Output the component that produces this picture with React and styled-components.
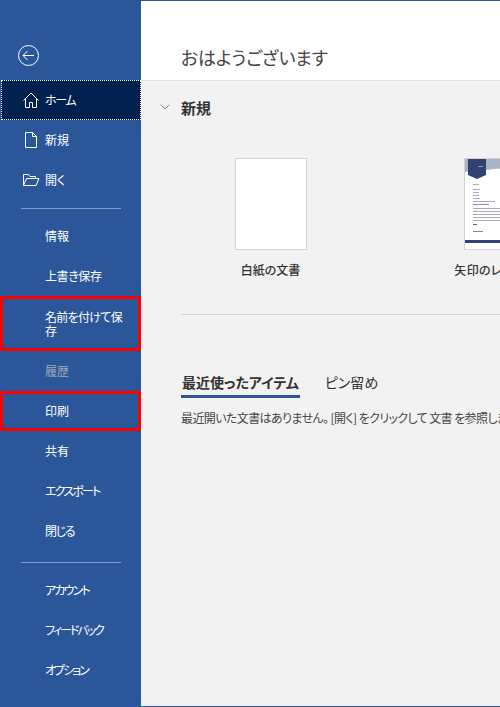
import React from "react";
import styled, { createGlobalStyle } from "styled-components";
import { ChevronDown } from "lucide-react";

const GlobalStyle = createGlobalStyle`
  html, body {
    margin: 0;
    padding: 0;
    background: #f2f2f2;
  }
  body {
    font-family: "Noto Sans CJK JP", "Noto Sans", sans-serif;
    font-feature-settings: "palt";
  }
`;

const Window = styled.div`
  display: flex;
  width: 500px;
  height: 707px;
  overflow: hidden;
  box-sizing: border-box;
  border-top: 1px solid #2b579a;
  border-bottom: 1px solid #2b579a;
`;

const Sidebar = styled.nav`
  flex: 0 0 141px;
  display: flex;
  flex-direction: column;
  background: #2b579a;
`;

const BackButton = styled.div`
  height: 79px;
  display: flex;
  align-items: flex-start;
  padding: 44px 0 0 18px;
  box-sizing: border-box;
  color: #fff;
`;

const NavItem = styled.div`
  display: flex;
  align-items: center;
  box-sizing: border-box;
  min-height: 40px;
  padding: ${(p) => (p.$tall ? "0 6px 0 45px" : "0 0 0 45px")};
  height: ${(p) => (p.$tall ? "55px" : "40px")};
  font-size: 12px;
  line-height: 14px;
  letter-spacing: ${(p) => p.$track || "0"};
  color: ${(p) => (p.$disabled ? "#a0a8b8" : "#fff")};
  background: ${(p) => (p.$active ? "#002050" : "transparent")};
  border: ${(p) =>
    p.$mark
      ? "3px solid #ff0000"
      : p.$active
      ? "1px dotted #fff"
      : "0 solid transparent"};
  border-radius: ${(p) => (p.$mark ? "2px" : "0")};
  ${(p) => p.$mark && "padding-left: 42px;"}
  ${(p) => p.$active && "padding-left: 20px; margin-left: 1px;"}
  ${(p) => p.$withIcon && !p.$active && "padding-left: 22px;"}
`;

const NavIcon = styled.svg`
  flex: 0 0 18px;
  width: 18px;
  height: 18px;
  margin-right: 5px;
  fill: none;
  stroke: #fff;
  stroke-width: 1;
`;

const Separator = styled.div`
  height: 1px;
  margin: ${(p) => p.$margin};
  background: #7f9fca;
`;

const Main = styled.main`
  flex: 1;
  min-width: 0;
  display: flex;
  flex-direction: column;
  background: #f2f2f2;
  overflow: hidden;
`;

const Greeting = styled.header`
  height: 80px;
  box-sizing: border-box;
  padding: 44px 0 0 40px;
  background: #fff;
  border-bottom: 1px solid #e1e1e1;
  font-size: 18px;
  line-height: 24px;
  letter-spacing: -0.2px;
  color: #444;
`;

const SectionHead = styled.div`
  display: flex;
  align-items: center;
  gap: 8px;
  height: 20px;
  margin: 16px 0 0 16px;
  font-size: 15px;
  font-weight: 700;
  color: #333;
`;

const Tiles = styled.div`
  display: flex;
  gap: 84px;
  margin: 41px 0 0 57px;
`;

const Tile = styled.div`
  flex: 0 0 145px;
  display: flex;
  flex-direction: column;
  align-items: center;
`;

const Paper = styled.div`
  width: 72px;
  height: 92px;
  box-sizing: border-box;
  background: #fff;
  border: 1px solid #d2d2d2;
`;

const TileLabel = styled.div`
  margin-top: 12px;
  font-size: 12px;
  line-height: 16px;
  font-weight: 500;
  letter-spacing: ${(p) => p.$track || "0"};
  color: #333;
  white-space: nowrap;
`;

const Rule = styled.div`
  height: 1px;
  margin: 36px 0 0 40px;
  background: #d2d2d2;
`;

const TabBar = styled.div`
  display: flex;
  gap: 24px;
  margin: 57px 0 0 40px;
`;

const Tab = styled.div`
  height: 26px;
  box-sizing: border-box;
  padding: 0 1px;
  font-size: 14px;
  line-height: 20px;
  font-weight: ${(p) => (p.$active ? 700 : 400)};
  color: #333;
  border-bottom: ${(p) => (p.$active ? "3px solid #2b579a" : "0")};
`;

const EmptyText = styled.p`
  margin: 11px 0 0 40px;
  font-size: 12px;
  line-height: 18px;
  letter-spacing: -0.6px;
  color: #444;
  white-space: nowrap;
`;

const Home = () => (
  <NavIcon viewBox="0 0 18 18">
    <path d="M1.5 9.5 9 2l7.5 7.5M3.5 8v8.5h4v-5h3v5h4V8" />
  </NavIcon>
);

const Doc = () => (
  <NavIcon viewBox="0 0 18 18">
    <path d="M3.5 1.5h7l4 4v11h-11zM10.5 1.5v4h4" />
  </NavIcon>
);

const Folder = () => (
  <NavIcon viewBox="0 0 18 18">
    <path d="M1.5 14.5v-11h5l1.5 2h5.5v2M1.5 14.5l3-7h12.5l-3 7z" />
  </NavIcon>
);

const LetterThumb = () => (
  <svg width="72" height="92" viewBox="0 0 72 92">
    <rect width="72" height="92" fill="#fff" />
    <g style={{ filter: "blur(0.35px)" }}>
      <path d="M1 1h70v6L40 10 1 14z" fill="#a9b4c4" />
      <path d="M4 1h18v16l-9 4-9-4z" fill="#2f4272" />
      <g fill="#a8acb4">
        <rect x="14" y="8" width="5" height="1" fill="#8e9ab8" />
        <rect x="9" y="26" width="6" height="1" />
        <rect x="9" y="31" width="7" height="1" />
        <rect x="9" y="34" width="6" height="1" />
        <rect x="9" y="37" width="6" height="1" />
        <rect x="9" y="40" width="7" height="1" />
        <rect x="9" y="43" width="22" height="1" />
        <rect x="9" y="50" width="50" height="1" />
        <rect x="9" y="53" width="50" height="1" />
        <rect x="9" y="56" width="40" height="1" />
        <rect x="9" y="59" width="50" height="1" />
        <rect x="9" y="62" width="36" height="1" />
        <rect x="9" y="66" width="4" height="1" fill="#666" />
        <rect x="9" y="73" width="10" height="1" fill="#888" />
      </g>
      <rect x="9" y="46" width="16" height="1" fill="#7f8fc0" />
      <rect x="1" y="82" width="70" height="3" fill="#2f4272" />
    </g>
    <rect x="0.5" y="0.5" width="71" height="91" fill="none" stroke="#d2d2d2" />
  </svg>
);

const App = () => (
  <Window>
    <GlobalStyle />
    <Sidebar>
      <BackButton>
        <svg width="21" height="21" viewBox="0 0 21 21" fill="none" stroke="#fff">
          <circle cx="10.5" cy="10.5" r="10" />
          <path d="M16 10.5H5M9.5 6l-4.5 4.5L9.5 15" />
        </svg>
      </BackButton>
      <NavItem $active $track="-1.3px">
        <Home />
        ホーム
      </NavItem>
      <NavItem $withIcon>
        <Doc />
        新規
      </NavItem>
      <NavItem $withIcon>
        <Folder />
        開く
      </NavItem>
      <Separator $margin="8px 20px 7px 21px" />
      <NavItem>情報</NavItem>
      <NavItem $track="-0.4px">上書き保存</NavItem>
      <NavItem $mark $tall $track="-0.7px">
        名前を付けて保存
      </NavItem>
      <NavItem $disabled>履歴</NavItem>
      <NavItem $mark>印刷</NavItem>
      <NavItem>共有</NavItem>
      <NavItem $track="-1.8px">エクスポート</NavItem>
      <NavItem $track="-1.3px">閉じる</NavItem>
      <Separator $margin="11px 20px 7px 21px" />
      <NavItem $track="-1.8px">アカウント</NavItem>
      <NavItem $track="-2px">フィードバック</NavItem>
      <NavItem $track="-2px">オプション</NavItem>
    </Sidebar>
    <Main>
      <Greeting>おはようございます</Greeting>
      <SectionHead>
        <ChevronDown size={16} strokeWidth={1} color="#444" />
        新規
      </SectionHead>
      <Tiles>
        <Tile>
          <Paper />
          <TileLabel>白紙の文書</TileLabel>
        </Tile>
        <Tile>
          <LetterThumb />
          <TileLabel $track="0.3px">矢印のレイアウト</TileLabel>
        </Tile>
      </Tiles>
      <Rule />
      <TabBar>
        <Tab $active>最近使ったアイテム</Tab>
        <Tab>ピン留め</Tab>
      </TabBar>
      <EmptyText>
        最近開いた文書はありません。 [開く] をクリックして 文書 を参照します。
      </EmptyText>
    </Main>
  </Window>
);

export default App;
